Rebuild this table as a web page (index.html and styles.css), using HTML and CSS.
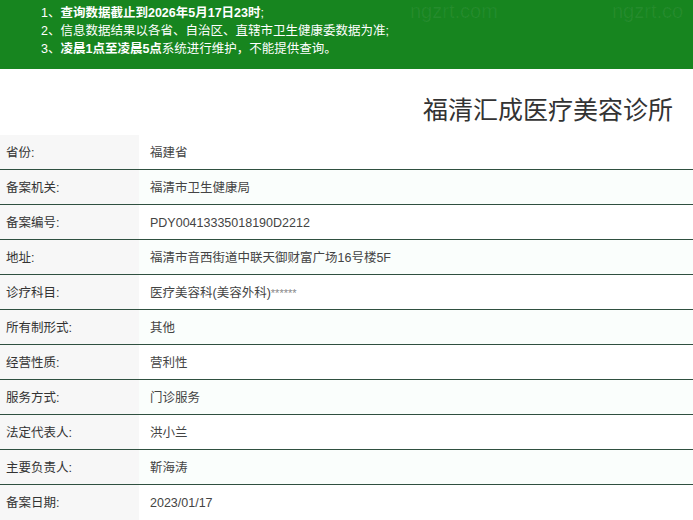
FILE: index.html
```html
<!DOCTYPE html>
<html lang="zh-CN">
<head>
<meta charset="utf-8">
<title>福清汇成医疗美容诊所</title>
<link rel="stylesheet" href="styles.css">
</head>
<body>
<div class="notice">
  <p>1、<b>查询数据截止到2026年5月17日23时</b>;</p>
  <p>2、信息数据结果以各省、自治区、直辖市卫生健康委数据为准;</p>
  <p>3、<b>凌晨1点至凌晨5点</b>系统进行维护，不能提供查询。</p>
  <span class="wm wm2">ngzrt.com</span>
  <span class="wm wm3">ngzrt.co</span>
</div>
<h1 class="title">福清汇成医疗美容诊所</h1>
<div class="table">
  <div class="row"><div class="k">省份:</div><div class="v">福建省</div></div>
  <div class="row"><div class="k">备案机关:</div><div class="v">福清市卫生健康局</div></div>
  <div class="row"><div class="k">备案编号:</div><div class="v">PDY00413335018190D2212</div></div>
  <div class="row"><div class="k">地址:</div><div class="v">福清市音西街道中联天御财富广场16号楼5F</div></div>
  <div class="row"><div class="k">诊疗科目:</div><div class="v">医疗美容科(美容外科)<span class="star">******</span></div></div>
  <div class="row"><div class="k">所有制形式:</div><div class="v">其他</div></div>
  <div class="row"><div class="k">经营性质:</div><div class="v">营利性</div></div>
  <div class="row"><div class="k">服务方式:</div><div class="v">门诊服务</div></div>
  <div class="row"><div class="k">法定代表人:</div><div class="v">洪小兰</div></div>
  <div class="row"><div class="k">主要负责人:</div><div class="v">靳海涛</div></div>
  <div class="row"><div class="k">备案日期:</div><div class="v">2023/01/17</div></div>
</div>
</body>
</html>
```
FILE: styles.css
```css
* { box-sizing: border-box; }
html, body { margin: 0; padding: 0; background: #fff; }
body {
  font-family: "Liberation Sans", "Noto Sans CJK SC", sans-serif;
  color: #333;
  font-size: 12.5px;
}
.notice {
  position: relative;
  overflow: hidden;
  background: #17851f;
  color: #fff;
  height: 69px;
  padding: 4px 0 0 41px;
}
.notice p {
  margin: 0;
  line-height: 18px;
  font-size: 12.5px;
}
.notice b { font-weight: 700; }
.wm {
  position: absolute;
  top: 0;
  color: rgba(255,255,255,0.06);
  font-family: "Liberation Sans", sans-serif;
  font-size: 20px;
  line-height: 22px;
}
.wm2 { left: 410px; }
.wm3 { left: 612px; }
.title {
  margin: 0;
  height: 66px;
  padding: 22px 20px 0 0;
  text-align: right;
  font-family: "Noto Sans CJK SC", sans-serif;
  font-size: 25px;
  font-weight: 400;
  line-height: 34px;
  color: #333;
}
.table { display: flex; flex-direction: column; }
.row {
  display: flex;
  height: 35px;
  border-bottom: 1px solid #2f5040;
}
.row:nth-child(even) { background: #fafefc; }
.row:last-child { border-bottom: none; }
.k {
  width: 139px;
  background: #f7f7f7;
  padding: 2px 0 0 6px;
  line-height: 33px;
  color: #333;
}
.v {
  padding: 2px 0 0 11px;
  line-height: 33px;
  color: #444;
}
.star { color: #888; font-size: 11px; }
```
